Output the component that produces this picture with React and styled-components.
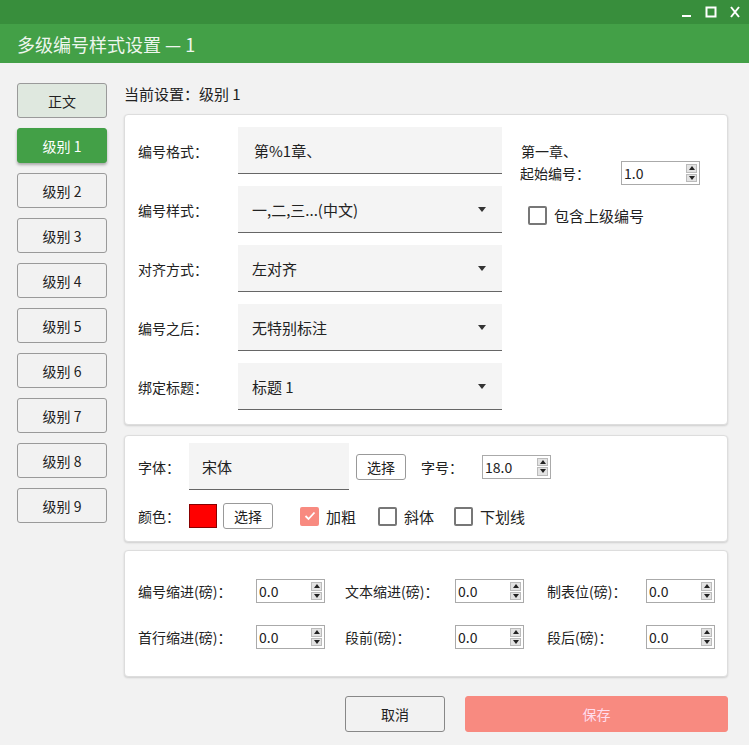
import React from "react";
import styled, { createGlobalStyle } from "styled-components";

const G = createGlobalStyle`
  body{margin:0;font-family:"Noto Sans CJK SC","Noto Sans",sans-serif;font-size:14px;color:#222;background:#f2f2f2;}
  *{box-sizing:border-box;}
`;
const Win = styled.div`width:749px;height:745px;background:#f2f2f2;display:flex;flex-direction:column;`;
const Top = styled.div`height:24px;background:#388e3c;display:flex;justify-content:flex-end;align-items:center;gap:12px;padding-right:8px;color:#fff;`;
const Title = styled.div`height:39px;background:#43a047;color:#eef6ee;font-size:18px;display:flex;align-items:center;padding-left:17px;`;
const Body = styled.div`display:flex;padding:20px 21px 0 17px;gap:17px;`;
const Side = styled.div`display:flex;flex-direction:column;gap:10px;width:90px;`;
const LvBtn = styled.div`height:35px;border-radius:3px;display:flex;align-items:center;justify-content:center;
  border:1px solid ${p=>p.active?"#43a047":"#9a9a9a"};
  background:${p=>p.active?"#43a047":p.main?"#dfe8df":"#f2f2f2"};
  color:${p=>p.active?"#fff":"#222"};box-shadow:${p=>p.active?"0 2px 3px rgba(0,0,0,.3)":"none"};`;
const Main = styled.div`flex:1;display:flex;flex-direction:column;`;
const Cur = styled.div`height:31px;line-height:22px;font-size:15px;`;
const Card = styled.div`background:#fff;border:1px solid #ddd;border-radius:4px;box-shadow:0 1px 2px rgba(0,0,0,.15);margin-bottom:${p=>p.mb||10}px;padding:${p=>p.pad};`;
const Card1 = styled(Card)`display:flex;height:311px;`;
const Rows = styled.div`display:flex;flex-direction:column;gap:12px;`;
const Row = styled.div`display:flex;align-items:center;`;
const Label = styled.div`width:${p=>p.w}px;flex-shrink:0;`;
const Field = styled.div`width:${p=>p.w}px;height:${p=>p.h||47}px;background:#f4f4f4;border-bottom:1px solid #666;display:flex;align-items:center;justify-content:space-between;padding:0 16px 0 ${p=>p.pl||14}px;font-size:15px;`;
const Caret = styled.span`width:0;height:0;border-left:4px solid transparent;border-right:4px solid transparent;border-top:5px solid #333;`;
const Right = styled.div`padding:14px 0 0 18px;display:flex;flex-direction:column;`;
const SpinBox = styled.div`width:${p=>p.w||69}px;height:24px;border:1px solid #aaa;display:flex;background:#fff;`;
const SpinVal = styled.div`flex:1;padding-left:2px;line-height:22px;font-size:14px;`;
const Arrows = styled.div`width:13px;display:flex;flex-direction:column;gap:1px;padding:2px 2px 2px 0;`;
const Arr = styled.div`flex:1;background:#e3e3e3;border:1px solid #bbb;display:flex;align-items:center;justify-content:center;&::after{content:"";border-left:3px solid transparent;border-right:3px solid transparent;${p=>p.up?"border-bottom:4px solid #222;":"border-top:4px solid #222;"}}`;
const Check = styled.span`width:19px;height:19px;border-radius:2px;border:2px solid ${p=>p.on?"#f88a80":"#777"};background:${p=>p.on?"#f88a80":"#fff"};display:inline-flex;align-items:center;justify-content:center;margin-right:7px;`;
const CheckWrap = styled.label`display:flex;align-items:center;font-size:15px;margin-right:${p=>p.mr||0}px;`;
const SmallBtn = styled.div`height:26px;padding:0 10px;border:1px solid #999;border-radius:3px;display:flex;align-items:center;background:#fff;`;
const Swatch = styled.div`width:28px;height:24px;background:#f00;border:1px solid #800;`;
const Grid = styled.div`display:grid;grid-template-columns:118px 89px 110px 92px 99px 69px;row-gap:22px;align-items:center;`;
const Foot = styled.div`display:flex;justify-content:flex-end;gap:20px;padding-top:9px;`;
const FootBtn = styled.div`width:${p=>p.w}px;height:36px;border-radius:3px;display:flex;align-items:center;justify-content:center;font-size:14px;
  background:${p=>p.primary?"#f88a80":"#f2f2f2"};color:${p=>p.primary?"#fde":"#222"};border:1px solid ${p=>p.primary?"#f88a80":"#888"};`;

const Spin = ({v,w}) => <SpinBox w={w}><SpinVal>{v}</SpinVal><Arrows><Arr up/><Arr/></Arrows></SpinBox>;
const tick = <svg width="12" height="10" viewBox="0 0 12 10"><path d="M1.5 5l3 3 6-6.5" stroke="#fff" strokeWidth="1.8" fill="none"/></svg>;

export default function App(){
  const rows=[["编号格式：","第%1章、",false],["编号样式：","一,二,三...(中文)",true],["对齐方式：","左对齐",true],["编号之后：","无特别标注",true],["绑定标题：","标题 1",true]];
  return <Win><G/>
    <Top>
      <svg width="12" height="12"><rect x="1" y="9" width="9" height="2" fill="#fff"/></svg>
      <svg width="12" height="12"><rect x="1.5" y="1.5" width="9" height="9" stroke="#fff" strokeWidth="2" fill="none"/></svg>
      <svg width="12" height="12"><path d="M2 1l8 10M10 1L2 11" stroke="#fff" strokeWidth="2"/></svg>
    </Top>
    <Title>多级编号样式设置 — 1</Title>
    <Body>
      <Side>
        <LvBtn main>正文</LvBtn>
        {[1,2,3,4,5,6,7,8,9].map(i=><LvBtn key={i} active={i===1}>级别 {i}</LvBtn>)}
      </Side>
      <Main>
        <Cur>当前设置：级别 1</Cur>
        <Card1 pad="12px 0 0 13px">
          <Rows>{rows.map(([l,v,c])=><Row key={l}><Label w={100}>{l}</Label><Field w={264} pl={c?14:16}>{v}{c&&<Caret/>}</Field></Row>)}</Rows>
          <Right>
            <div style={{paddingLeft:1}}>第一章、</div>
            <Row><Label w={101}>起始编号：</Label><Spin v="1.0" w={79}/></Row>
            <div style={{height:20}}/>
            <CheckWrap style={{paddingLeft:8}}><Check/>包含上级编号</CheckWrap>
          </Right>
        </Card1>
        <Card pad="7px 0 12px 13px" mb={8}>
          <Row style={{gap:0}}>
            <Label w={51}>字体：</Label>
            <Field w={160} pl={13}>宋体</Field>
            <div style={{width:7}}/><SmallBtn>选择</SmallBtn>
            <div style={{width:15}}/><Label w={61}>字号：</Label><Spin v="18.0"/>
          </Row>
          <Row style={{marginTop:13}}>
            <Label w={51}>颜色：</Label><Swatch/><div style={{width:6}}/><SmallBtn>选择</SmallBtn>
            <div style={{width:27}}/>
            <CheckWrap mr={22}><Check on>{tick}</Check>加粗</CheckWrap>
            <CheckWrap mr={20}><Check/>斜体</CheckWrap>
            <CheckWrap><Check/>下划线</CheckWrap>
          </Row>
        </Card>
        <Card pad="28px 0 27px 13px" mb={0}>
          <Grid>
            <span>编号缩进(磅)：</span><Spin v="0.0"/><span>文本缩进(磅)：</span><Spin v="0.0"/><span>制表位(磅)：</span><Spin v="0.0"/>
            <span>首行缩进(磅)：</span><Spin v="0.0"/><span>段前(磅)：</span><Spin v="0.0"/><span>段后(磅)：</span><Spin v="0.0"/>
          </Grid>
        </Card>
        <Foot><FootBtn w={100}>取消</FootBtn><FootBtn w={263} primary>保存</FootBtn></Foot>
      </Main>
    </Body>
  </Win>;
}
